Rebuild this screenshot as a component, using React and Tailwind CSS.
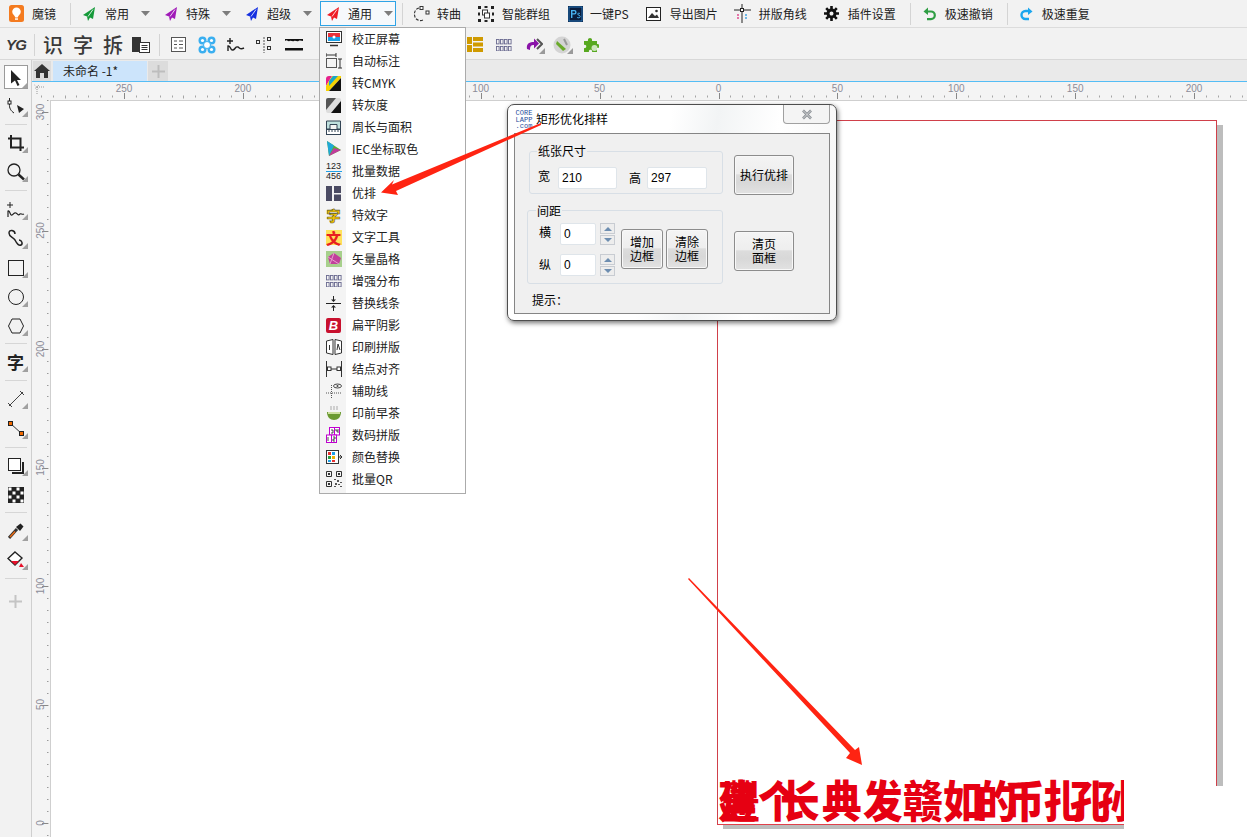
import React from 'react';

const font = { fontFamily: '"Noto Sans CJK SC", "Liberation Sans", sans-serif' };

const Svg = ({ w = 16, h = 16, className = '', children }) => (
    <svg width={w} height={h} viewBox={`0 0 ${w} ${h}`} className={`shrink-0 ${className}`}>{children}</svg>
);

const Plane = ({ color }) => (
    <Svg w={12} h={14}>
        <path d="M12 0 L0 8 L4 9.5 L5 14 L7 10.5 L10 12 Z" fill={color} />
        <path d="M10 2.5 L5 9.5" stroke="#fff" strokeWidth="0.8" fill="none" />
    </Svg>
);

const Caret = () => <Svg w={9} h={5}><path d="M0 0 H9 L4.5 5 Z" fill="#7d7d7d" /></Svg>;

const Sep = ({ className = '' }) => <div className={`w-px h-[22px] bg-[#d4d4d4] shrink-0 ${className}`} />;

const Item = ({ icon, label, className = '', gap = 'ml-2' }) => (
    <div className={`flex items-center shrink-0 ${className}`}>
        {icon}
        <span className={`${gap} whitespace-nowrap`}>{label}</span>
    </div>
);

const Row1 = () => (
    <div className="h-[28px] bg-[#f2f2f2] border-b border-[#dcdcdc] flex items-center pl-[9px] text-[12px] text-[#222]">
        <Svg w={15} h={17}>
            <rect width="15" height="17" rx="2.5" fill="#f47b20" />
            <path d="M7.5 2.5 a4.3 4.3 0 0 1 4.3 4.3 c0 2.6 -2.6 3.5 -3.1 5.7 h-2.4 c-.5 -2.2 -3.1 -3.1 -3.1 -5.7 a4.3 4.3 0 0 1 4.3 -4.3 Z" fill="#fff" />
            <rect x="6" y="13.3" width="3" height="1.5" fill="#fff" />
        </Svg>
        <span className="ml-2">魔镜</span>
        <Sep className="ml-[14px]" />
        <div className="flex items-center w-[82px] ml-3 shrink-0"><Plane color="#159a3a" /><span className="ml-[10px]">常用</span><span className="ml-3 flex"><Caret /></span></div>
        <div className="flex items-center w-[81px] shrink-0"><Plane color="#a01ab8" /><span className="ml-[9px]">特殊</span><span className="ml-3 flex"><Caret /></span></div>
        <div className="flex items-center w-[74px] shrink-0"><Plane color="#1530e0" /><span className="ml-[9px]">超级</span><span className="ml-3 flex"><Caret /></span></div>
        <div className="flex items-center w-[76px] h-[25px] pl-[6px] shrink-0 border border-[#2ea3e6] bg-[#f6f9fc]"><Plane color="#ee1c25" /><span className="ml-[9px]">通用</span><span className="ml-3 flex"><Caret /></span></div>
        <Sep className="ml-[6px]" />
        <Item className="ml-[9px]" gap="ml-[7px]" label="转曲" icon={
            <Svg w={18} h={18}>
                <path d="M7 3 C3 4 1.5 8 3 12 C4 15 8 16.5 11 15" fill="none" stroke="#333" strokeWidth="1.1" strokeDasharray="3 1.4" />
                <rect x="8" y="1.5" width="3" height="3" fill="#fff" stroke="#333" />
                <rect x="14" y="6" width="3" height="3" fill="#fff" stroke="#333" />
            </Svg>
        } />
        <Item className="ml-[17px]" label="智能群组" icon={
            <Svg w={16} h={16}>
                <path d="M0 0h3v3H0zM6.5 0h3v2h-3zM13 0h3v3h-3zM0 13h3v3H0zM6.5 14h3v2h-3zM13 13h3v3h-3zM0 6.5h2v3H0zM14 6.5h2v3h-2z" fill="#222" />
                <rect x="4.5" y="4" width="5" height="5" fill="#fff" stroke="#333" />
                <rect x="6.5" y="7" width="5" height="5" fill="#fff" stroke="#333" />
            </Svg>
        } />
        <Item className="ml-[18px]" gap="ml-[7px]" label="一键PS" icon={
            <Svg w={15} h={16}>
                <rect width="15" height="16" fill="#0a1d3c" />
                <rect x="1" y="1" width="13" height="14" fill="none" stroke="#2e8bd8" strokeWidth="0.8" />
                <path d="M3 4h3.4a2 2 0 0 1 0 4.4H4.4V12H3z M4.4 5.2v2h1.8a1 1 0 0 0 0-2z" fill="#49b4f2" />
                <path d="M12 7.6c-1-.6-2.4-.5-2.4.5 0 1.2 2.6.8 2.6 2.4 0 1.4-1.8 1.6-3 1" stroke="#49b4f2" strokeWidth="1" fill="none" />
            </Svg>
        } />
        <Item className="ml-[17px]" gap="ml-[9px]" label="导出图片" icon={
            <Svg w={15} h={14}>
                <rect x="0.5" y="0.5" width="14" height="13" fill="#fff" stroke="#222" />
                <path d="M2 11 L6 6 L9 9 L11 7.5 L13 11 Z" fill="#333" />
                <circle cx="10.5" cy="4" r="1.3" fill="#333" />
            </Svg>
        } />
        <Item className="ml-4" label="拼版角线" icon={
            <Svg w={17} h={19}>
                <path d="M8 0v19M0 6h17" stroke="#222" strokeWidth="1" />
                <rect x="6.5" y="4.5" width="3" height="3" fill="#fff" stroke="#222" />
                <path d="M4 10v2M4 13v2" stroke="#e0408a" strokeWidth="1.4" />
                <path d="M12 10v2M12 13v2" stroke="#3aa0e0" strokeWidth="1.4" />
            </Svg>
        } />
        <Item className="ml-[17px]" gap="ml-[9px]" label="插件设置" icon={
            <Svg w={15} h={15}>
                <path d="M7.5 4a3.5 3.5 0 1 0 0 7 3.5 3.5 0 0 0 0-7z" fill="none" stroke="#111" strokeWidth="3" />
                <path d="M7.5 0v15M0 7.5h15M2.2 2.2l10.6 10.6M12.8 2.2L2.2 12.8" stroke="#111" strokeWidth="2.6" strokeDasharray="3 9 3 0" />
            </Svg>
        } />
        <Sep className="ml-[14px]" />
        <Item className="ml-3" gap="ml-[9px]" label="极速撤销" icon={
            <Svg w={13} h={14}>
                <path d="M3.5 4.5 H8 a3.8 3.8 0 0 1 0 7.6 H4" fill="none" stroke="#2f9e44" strokeWidth="2.2" />
                <path d="M5 0.5 V8 L0.5 4.5 Z" fill="#2f9e44" />
            </Svg>
        } />
        <Sep className="ml-[14px]" />
        <Item className="ml-[11px]" gap="ml-[9px]" label="极速重复" icon={
            <Svg w={14} h={14}>
                <path d="M10 4 H6.5 a4 4 0 0 0 0 8 H10" fill="none" stroke="#1ca6ee" strokeWidth="2.4" />
                <path d="M9 0.5 V8 L13.5 4.5 Z" fill="#1ca6ee" />
            </Svg>
        } />
    </div>
);

const Grid4 = ({ fill = '#6a6a90' }) => (
    <Svg w={16} h={12}>
        {[0, 7].map(y => [0, 4, 8, 12].map(x => <rect key={`${x}-${y}`} x={x + 0.5} y={y + 0.5} width="2.6" height="4.4" fill="none" stroke={fill} strokeWidth="0.9" />))}
    </Svg>
);

const Corner = () => <span className="absolute right-[1px] bottom-[1px] w-0 h-0 border-l-[6px] border-l-transparent border-b-[6px] border-b-[#9a9a9a]" />;

const Row2 = () => (
    <div className="h-[32px] bg-[#f2f2f2] border-b border-[#d8d8d8] flex items-center pl-[6px] pt-[2px] text-[#3a3a3a]">
        <span className="w-[20px] text-[15px] font-black italic leading-none tracking-tighter" style={{ fontFamily: '"Liberation Sans", sans-serif' }}>YG</span>
        <Sep className="ml-2" />
        <span className="ml-2 w-[30px] text-[20px] font-medium leading-none">识</span>
        <span className="w-[30px] text-[20px] font-medium leading-none">字</span>
        <span className="w-[28px] text-[20px] font-medium leading-none">拆</span>
        <Svg w={20} h={18}>
            <path d="M1 1h9v15H1z" fill="#333" />
            <rect x="8.5" y="6.5" width="10" height="10" fill="#fff" stroke="#333" />
            <path d="M10.5 9.5h6M10.5 11.5h6M10.5 13.5h6" stroke="#333" />
        </Svg>
        <Sep className="ml-2" />
        <span className="ml-[11px] flex">
            <Svg w={15} h={15}>
                <rect x="0.5" y="0.5" width="14" height="14" fill="#fff" stroke="#555" />
                <path d="M3 4h3M3 7.5h3M3 11h3M8 4h4M8 7.5h4M8 11h4" stroke="#555" />
            </Svg>
        </span>
        <span className="ml-3 flex">
            <Svg w={18} h={18}>
                <g fill="#3aaff0">
                    <circle cx="4.5" cy="4.5" r="4" /><circle cx="13.5" cy="4.5" r="4" /><circle cx="4.5" cy="13.5" r="4" /><circle cx="13.5" cy="13.5" r="4" />
                </g>
                <circle cx="9" cy="9" r="3.5" fill="#fff" stroke="#3aaff0" />
                <circle cx="4.5" cy="4.5" r="1.6" fill="#fff" /><circle cx="13.5" cy="4.5" r="1.6" fill="#fff" /><circle cx="4.5" cy="13.5" r="1.6" fill="#fff" /><circle cx="13.5" cy="13.5" r="1.6" fill="#fff" />
            </Svg>
        </span>
        <span className="ml-[11px] flex">
            <Svg w={18} h={16}>
                <path d="M3 1v6M0 4h6" stroke="#222" strokeWidth="1.4" />
                <path d="M1 14 V9 C4 8 3 14 6 13 C9 12 8 9 11 10 C13 11 13 13 17 11" fill="none" stroke="#222" strokeWidth="1.4" />
            </Svg>
        </span>
        <span className="ml-[11px] flex">
            <Svg w={18} h={16}>
                <rect x="0.5" y="3.5" width="3" height="3" fill="none" stroke="#333" />
                <rect x="11.5" y="0.5" width="3" height="3" fill="none" stroke="#333" />
                <rect x="11.5" y="9.5" width="3" height="3" fill="none" stroke="#333" />
                <path d="M8 0v16" stroke="#555" strokeDasharray="2 1" />
            </Svg>
        </span>
        <span className="ml-[11px] flex">
            <Svg w={18} h={14}>
                <path d="M0 3c2-2 3 1 4.5 0s3 1 4.500 0 3 1 4.500 0 3 0 4.500 0V1H0z" fill="#111" />
                <rect y="10" width="18" height="2.500" fill="#111" />
            </Svg>
        </span>
    </div>
);

const TopRight = () => (
    <div className="absolute left-[467px] top-[28px] h-[31px] pt-[2px] flex items-center">
        <Svg w={16} h={15}>
            <path d="M0 0h5v7H0zM0 8h5v7H0zM6 0h10v4H6zM6 5.500h10v4H6zM6 11h10v4H6z" fill="#cf9a00" />
        </Svg>
        <span className="ml-[13px] flex"><Grid4 /></span>
        <span className="ml-[14px] relative flex w-[20px] h-[20px] items-center">
            <Svg w={17} h={15}>
                <path d="M1 12 C0 6 4 5 8 5 V1.500 L13 6.500 L8 11.500 V8 C5 8 4 9 4 13 Z" fill="#8a14a8" />
                <path d="M11 2 L16 7 L11 12" fill="none" stroke="#555" strokeWidth="2" />
            </Svg>
            <Corner />
        </span>
        <span className="ml-[7px] relative flex w-[21px] h-[20px] items-center">
            <Svg w={18} h={18}>
                <circle cx="9" cy="9" r="8.500" fill="#d4d4d4" />
                <path d="M4 5 L13 13 L10 15 L3 8 Z" fill="#6aaa2a" />
                <path d="M11 3 L14 9" stroke="#999" strokeWidth="2" />
            </Svg>
            <Corner />
        </span>
        <span className="ml-[9px] flex">
            <Svg w={16} h={17}>
                <path d="M1 5h4c-1-4 5-4 4 0h5v3c3-1 3 5 0 4v4H9c1-3-4-3-3 0H1v-4c3 1 3-4 0-3z" fill="#57a81f" />
                <circle cx="11.500" cy="12" r="3" fill="#fff" opacity=".7" />
            </Svg>
        </span>
    </div>
);

const HRuler = () => {
    const x0 = 718.5 - 32;
    const labels = [[-5, 250], [-4, 200], [-3, 150], [-2, 100], [-1, 50], [0, 0], [1, 50], [2, 100], [3, 150], [4, 200]];
    const dots = [];
    for (let i = -60; i <= 50; i++) dots.push(x0 + i * 11.89);
    return (
        <svg width="1215" height="18" className="block bg-[#f4f4f4]">
            <g stroke="#a5a5a5">
                {dots.map(x => <path key={x} d={`M${Math.round(x)}.5 13.500v${Math.abs(x - x0) % 59.45 < 1 ? 3 : 2}`} />)}
            </g>
            {labels.map(([k, t]) => (
                <g key={k}>
                    <path d={`M${Math.round(x0 + k * 118.9)}.5 11v6`} stroke="#888" />
                    <text x={x0 + k * 118.9} y="10" fontSize="10" textAnchor="middle" fill="#8c8c98" fontFamily="Liberation Sans">{t}</text>
                </g>
            ))}
            <path d="M2.500 3 L7 7 M7 3 L2.500 7 M5 5 L12 5 M5 5V12" stroke="#999" strokeDasharray="1 1" />
        </svg>
    );
};

const VRuler = () => {
    const y0 = 823 - 100;
    const labels = [[-6, 300], [-5, 250], [-4, 200], [-3, 150], [-2, 100], [-1, 50], [0, 0]];
    const dots = [];
    for (let i = -62; i <= 10; i++) dots.push(y0 + i * 11.85);
    return (
        <svg width="18" height="737" className="block bg-[#f4f4f4] shrink-0">
            <g stroke="#9a9a9a">
                {dots.map(y => <path key={y} d={`M15 ${Math.round(y)}.5h1.500`} />)}
            </g>
            {labels.map(([k, t]) => {
                const y = y0 + k * 118.5;
                return (
                    <g key={k}>
                        <path d={`M10 ${Math.round(y)}.5h6`} stroke="#888" />
                        <text transform={`translate(11.500 ${y}) rotate(-90)`} fontSize="10" textAnchor="middle" fill="#8c8c98" fontFamily="Liberation Sans">{t}</text>
                    </g>
                );
            })}
        </svg>
    );
};

const Tool = ({ children, active, noCorner, className = '' }) => (
    <div className={`relative w-[24px] mx-auto h-[29px] flex items-center justify-center shrink-0 ${className}`}>
        {active && <span className="absolute inset-x-0 top-[2px] bottom-[3px] border border-[#9a9a9a] bg-white" />}
        <span className="relative flex">{children}</span>
        {!noCorner && <span className="absolute right-0 bottom-[4px] w-0 h-0 border-l-[6px] border-l-transparent border-b-[6px] border-b-[#a0a0a0]" />}
    </div>
);

const ToolSep = ({ className }) => (
    <div className={`flex items-center shrink-0 ${className}`}><div className="w-[22px] mx-auto h-px bg-[#d6d6d6]" /></div>
);

const LeftBar = () => (
    <div className="w-[32px] shrink-0 bg-[#f2f2f2] border-r border-[#cfcfcf] flex flex-col pt-[3px]">
        <Tool active><Svg w={12} h={16}><path d="M1 0 L11 10 H7 L9.500 15 L7.500 16 L5 10.500 L1 13.500 Z" fill="#222" /></Svg></Tool>
        <Tool>
            <Svg w={18} h={18}>
                <rect x="1" y="3" width="3" height="3" fill="#fff" stroke="#222" />
                <path d="M2.500 0 v3 M2.500 6 C2 10 4 13 7 15" fill="none" stroke="#222" />
                <path d="M10 7 L17 11 L12 15 Z" fill="#222" />
            </Svg>
        </Tool>
        <ToolSep className="h-[7px]" />
        <Tool>
            <Svg w={16} h={16}>
                <path d="M3 0 V12.500 H16 M0 3.500 H12.500 V16" fill="none" stroke="#222" strokeWidth="2" />
            </Svg>
        </Tool>
        <Tool>
            <Svg w={18} h={18}>
                <circle cx="7" cy="7" r="6" fill="none" stroke="#222" strokeWidth="1.300" />
                <path d="M11.500 11.500 L17 16.500" stroke="#222" strokeWidth="2.400" />
            </Svg>
        </Tool>
        <ToolSep className="h-[9px]" />
        <Tool>
            <Svg w={18} h={16}>
                <path d="M3 0v6M0 3h6" stroke="#222" />
                <path d="M1 15 V9 C3 8 3 14 5 13 C7 12 7 10 9 11 C11 12 11 14 13 12 C14 11 15 13 17 12" fill="none" stroke="#222" strokeWidth="1.200" />
            </Svg>
        </Tool>
        <Tool>
            <Svg w={17} h={19}>
                <path d="M8 5 C8 1 2 0 2 4 C2 8 6 8 8 11 C10 15 12 17 14 16 C16 15 15 11 12 11" fill="none" stroke="#222" strokeWidth="1.500" />
            </Svg>
        </Tool>
        <Tool><Svg w={16} h={16}><rect x="0.500" y="0.500" width="15" height="15" fill="none" stroke="#222" /></Svg></Tool>
        <Tool><Svg w={16} h={16}><circle cx="8" cy="8" r="7.500" fill="none" stroke="#222" /></Svg></Tool>
        <Tool><Svg w={16} h={16}><path d="M4 1 H12 L15.500 8 L12 15 H4 L0.500 8 Z" fill="none" stroke="#222" /></Svg></Tool>
        <ToolSep className="h-[7px]" />
        <Tool><span className="text-[17px] font-bold leading-none text-[#222]">字</span></Tool>
        <ToolSep className="h-[8px]" />
        <Tool>
            <Svg w={16} h={16}><path d="M1 15 L15 1" stroke="#444" /><path d="M0 12 L4 16 M12 0 L16 4" stroke="#444" /></Svg>
        </Tool>
        <Tool className="mt-[1px]">
            <Svg w={16} h={16}>
                <path d="M2 2 L14 13" stroke="#333" />
                <rect x="0.500" y="0.500" width="4" height="4" fill="#f26a00" stroke="#222" />
                <rect x="11.500" y="10.500" width="4" height="4" fill="#f26a00" stroke="#222" />
            </Svg>
        </Tool>
        <ToolSep className="h-[8px]" />
        <Tool>
            <Svg w={16} h={16}>
                <rect x="0.500" y="0.500" width="12" height="12" fill="#fff" stroke="#222" />
                <path d="M4 15 H15 V4" fill="none" stroke="#222" strokeWidth="2" />
            </Svg>
        </Tool>
        <Tool noCorner>
            <Svg w={16} h={16}>
                <rect width="16" height="16" fill="#222" />
                {[0, 4, 8, 12].flatMap(y => [0, 4, 8, 12].map(x => (x + y) % 8 === 0 ? <rect key={`${x}-${y}`} x={x + 0.500} y={y + 0.500} width="3" height="3" fill="#fff" /> : null))}
            </Svg>
        </Tool>
        <ToolSep className="h-[7px]" />
        <Tool>
            <Svg w={16} h={16}>
                <path d="M1 15 L9 6" stroke="#333" strokeWidth="3" />
                <path d="M2 14 L7 8.500" stroke="#ea6a12" strokeWidth="1.500" />
                <path d="M8 4 L12 8 L15.500 3.500 L12.500 0.500 Z" fill="#222" />
            </Svg>
        </Tool>
        <Tool>
            <Svg w={17} h={17}>
                <path d="M8 1 L15 7 L8 14 L1 7.500 Z" fill="#fff" stroke="#222" strokeWidth="1.400" />
                <path d="M4 10 L12 10 L8 14 Z" fill="#e8102a" />
                <path d="M14 12 L17 16 H12 Z" fill="#e8102a" />
            </Svg>
        </Tool>
        <ToolSep className="h-[8px]" />
        <Tool noCorner className="mt-[5px]">
            <Svg w={13} h={13}><path d="M6.500 0v13M0 6.500h13" stroke="#c4c4c4" strokeWidth="2" /></Svg>
        </Tool>
    </div>
);

const menuItems = [
    ['校正屏幕', <Svg key="a" w={16} h={16}><rect x="0.500" y="0.500" width="15" height="11" fill="#fff" stroke="#333" /><rect x="2" y="2" width="12" height="4" fill="#e8303a" /><rect x="2" y="6" width="12" height="4" fill="#1aa0e8" /><circle cx="8" cy="6" r="1.500" fill="#fff" /><path d="M4 14.500h8" stroke="#333" strokeWidth="1.500" /></Svg>],
    ['自动标注', <Svg key="b" w={16} h={16}><path d="M0 0v4M10 0v4M0 2h10M14 6v9M12 6h4M12 15h4" stroke="#333" /><rect x="0.500" y="5.500" width="10" height="9" fill="none" stroke="#555" /></Svg>],
    ['转CMYK', <Svg key="c" w={15} h={15}><path d="M0 3 Q0 0 3 0 H6 L0 10 Z" fill="#e6218c" /><path d="M6 0 H15 V2 L3 15 H0 V10 Z" fill="#f7d300" /><path d="M15 2 V15 H3 Z" fill="#111" /><path d="M7 0 H12 L3 10 V5 Z" fill="#00a0e0" opacity=".9" /></Svg>],
    ['转灰度', <Svg key="d" w={15} h={15}><rect width="15" height="15" rx="2" fill="#ddd" /><path d="M0 12 L10 0 H2 Q0 0 0 2 Z" fill="#555" /><path d="M15 3 V15 H5 Z" fill="#111" /></Svg>],
    ['周长与面积', <Svg key="e" w={15} h={15}><path d="M0.500 9 V1 H14.500 V9 H11 V4.500 H4 V9 Z" fill="#bfe0de" stroke="#345" /><rect x="0.500" y="9.500" width="14" height="5" fill="#fff" stroke="#345" /><path d="M3 10v2M6 10v2M9 10v2M12 10v2" stroke="#345" /></Svg>],
    ['IEC坐标取色', <Svg key="f" w={16} h={16}><path d="M1 0 L15 9 L3 15 Z" fill="#5bb030" /><path d="M1 0 L8 4.500 L3 15 Z" fill="#20a8d8" /><path d="M15 9 L3 15 L8 7 Z" fill="#c03a9c" /></Svg>],
    ['批量数据', <span key="g" className="w-[16px] text-[9px] leading-[9px] text-center text-[#222]" style={{ fontFamily: '"Liberation Sans", sans-serif' }}><span className="block">123</span><span className="block border-t border-[#1ca0e8]">456</span></span>],
    ['优排', <Svg key="h" w={15} h={15}><path d="M0 0h6v15H0zM8 0h7v7H8zM8 8.500h7V15H8z" fill="#4b4b63" /></Svg>],
    ['特效字', <span key="i" className="text-[14px] font-black leading-none text-[#f4c400] w-[16px] text-center" style={{ WebkitTextStroke: '0.6px #553' }}>字</span>],
    ['文字工具', <span key="j" className="text-[15px] font-black leading-none text-[#e82020] bg-[#ffe25a] w-[16px] h-[15px] text-center">文</span>],
    ['矢量晶格', <Svg key="k" w={16} h={16}><rect width="16" height="16" fill="#a7d08c" /><path d="M2 6 L8 2 L15 7 L13 13 L4 13 Z" fill="#c2409c" /><path d="M2 6 L13 13 M8 2 L4 13" stroke="#e8a0d0" /></Svg>],
    ['增强分布', <Grid4 key="l" />],
    ['替换线条', <Svg key="m" w={15} h={15}><path d="M0 7.500h15" stroke="#222" /><path d="M7.500 0v5M7.500 10v5" stroke="#222" /><path d="M5 3.500 L7.500 6 L10 3.500 ZM5 11.500 L7.500 9 L10 11.500 Z" fill="#222" /></Svg>],
    ['扁平阴影', <span key="n" className="w-[15px] h-[15px] rounded-[2px] bg-[#c8102e] text-white text-[13px] font-black italic leading-[15px] text-center" style={{ fontFamily: '"Liberation Sans", sans-serif' }}>B</span>],
    ['印刷拼版', <Svg key="o" w={16} h={16}><path d="M0.500 2 L7 0.500 V15.500 L0.500 14 Z M9 0.500 L15.500 2 V14 L9 15.500 Z" fill="#fff" stroke="#333" /><path d="M3.500 11 V6 M11 11 L12 5 L14 11" stroke="#333" fill="none" /></Svg>],
    ['结点对齐', <Svg key="p" w={16} h={16}><path d="M0.500 0v16M15.500 0v16M0 8h16" stroke="#333" /><rect x="1.500" y="6" width="3.500" height="3.500" fill="#fff" stroke="#333" /><rect x="11" y="6" width="3.500" height="3.500" fill="#fff" stroke="#333" /></Svg>],
    ['辅助线', <Svg key="q" w={16} h={16}><path d="M5.500 2v14M0 10h16" stroke="#555" strokeDasharray="1 1" /><ellipse cx="11.500" cy="3" rx="4" ry="2" fill="none" stroke="#444" /><circle cx="11.500" cy="3" r="1" fill="#444" /></Svg>],
    ['印前早茶', <Svg key="r" w={16} h={15}><path d="M5 0v4M8 0v4M11 0v4" stroke="#aaa" /><path d="M1 6 H15 C15 11 12 14 8 14 C4 14 1 11 1 6 Z" fill="#6a9a30" /><path d="M2 6 H14 V8 H2 Z" fill="#cde0a0" /></Svg>],
    ['数码拼版', <Svg key="s" w={16} h={16}><rect x="3.500" y="0.500" width="10" height="7.500" fill="#fff" stroke="#c000d0" /><rect x="0.500" y="8" width="10" height="7.500" fill="#fff" stroke="#c000d0" /><path d="M8.500 0.500v7.500M5.500 8v7.500" stroke="#c000d0" /><path d="M5 3h2v3H5M10 2v2h2M12 2v4M2 10v4M7 10h2v2H7v2h2" fill="none" stroke="#222" strokeWidth=".8" /></Svg>],
    ['颜色替换', <Svg key="t" w={16} h={14}><rect x="0.500" y="0.500" width="12" height="13" fill="#fff" stroke="#333" /><path d="M2 2h3v3H2z" fill="#e83030" /><path d="M6 2h3v3H6z" fill="#1ca0e8" /><path d="M2 6h3v3H2z" fill="#2aa040" /><path d="M6 6h3v3H6z" fill="#f0b000" /><path d="M2 10h3v2H2z" fill="#1ca0e8" /><path d="M6 10h3v2H6z" fill="#e83030" /><path d="M12 7h4M14 5 L16 7 L14 9" fill="none" stroke="#333" /></Svg>],
    ['批量QR', <Svg key="u" w={16} h={16}><path d="M0.500 0.500h5v5h-5zM10.500 0.500h5v5h-5zM0.500 10.500h5v5h-5z" fill="none" stroke="#333" /><path d="M2 2h2v2H2zM12 2h2v2h-2zM2 12h2v2H2z" fill="#333" /><path d="M8 8h2v1H8zM11 9h2v2h-2zM14 11h2v1h-2zM9 12h2v2H9zM12 13h2v1h-2zM8 15h2v1H8zM14 15h2v1h-2z" fill="#555" /></Svg>],
];

const GeneralMenu = () => (
    <div className="absolute left-[319px] top-[27px] w-[147px] h-[467px] bg-white border border-[#ababab] flex flex-col text-[12px] text-[#222]">
        {menuItems.map(([label, icon]) => (
            <div key={label} className="h-[22px] flex items-center shrink-0">
                <div className="w-[26px] h-full bg-[#f4f4f4] flex items-center justify-center pl-[1px]">{icon}</div>
                <span className="ml-[6px] whitespace-nowrap">{label}</span>
            </div>
        ))}
        <div className="flex-1 w-[26px] bg-[#f4f4f4]" />
    </div>
);

const DlgBtn = ({ className = '', children }) => (
    <div className={`flex items-center justify-center text-center leading-[14px] border border-[#8c8c8c] rounded-[3px] bg-[linear-gradient(#f4f4f4_0%,#eeeeee_46%,#dcdcdc_50%,#d8d8d8_70%,#e2e2e2_100%)] shadow-[inset_0_0_0_1px_#f8f8f8] shrink-0 ${className}`}>
        {children}
    </div>
);

const Field = ({ className = '', children }) => (
    <div className={`h-[22px] bg-white border border-[#dfe5ea] rounded-[2px] flex items-center pl-[3px] text-[12px] shrink-0 ${className}`} style={{ fontFamily: '"Liberation Sans", sans-serif' }}>{children}</div>
);

const Spin = () => (
    <div className="ml-[4px] flex flex-col gap-px w-[15px] shrink-0">
        <div className="h-[11px] bg-[#ededed] border border-[#c8ccd2] flex items-center justify-center"><span className="w-0 h-0 border-x-[4px] border-x-transparent border-b-[4px] border-b-[#6d8db0]" /></div>
        <div className="h-[10px] bg-[#ededed] border border-[#c8ccd2] flex items-center justify-center"><span className="w-0 h-0 border-x-[4px] border-x-transparent border-t-[4px] border-t-[#6d8db0]" /></div>
    </div>
);

const Dialog = () => (
    <div className="absolute left-[507px] top-[104px] w-[330px] h-[217px] rounded-[7px] border border-[#4e4e4e] bg-[linear-gradient(100deg,#fff_0%,#fff_45%,#f2f4f5_58%,#fff_75%,#f4f4f4_100%)] shadow-[1px_2px_5px_rgba(0,0,0,0.55)] flex flex-col text-[12px] text-black">
        <div className="h-[28px] flex items-start shrink-0">
            <div className="ml-[7px] mt-[5px] w-[18px] text-[7px] leading-[6.500px] text-[#1f4e9c] text-center" style={{ fontFamily: '"Liberation Mono", monospace' }}>CORE<br />LAPP<br />.com</div>
            <span className="ml-[3px] mt-[5px] leading-[18px]">矩形优化排样</span>
            <div className="ml-auto mr-[6px] w-[47px] h-[19px] rounded-b-[4px] border border-t-0 border-[#a0a0a0] bg-[#f4f4f4] flex items-center justify-center">
                <Svg w={12} h={11}><path d="M2 1.500 L10 9.500 M10 1.500 L2 9.500" stroke="#8a8f95" strokeWidth="2.600" /><path d="M2 1.500 L10 9.500 M10 1.500 L2 9.500" stroke="#e8e8e8" strokeWidth="0.800" /></Svg>
            </div>
        </div>
        <div className="mx-[6px] mb-[6px] flex-1 border border-[#858585] bg-[#f0f0f0] flex">
            <div className="w-[208px] shrink-0 flex flex-col">
                <div className="relative ml-[14px] mt-[17px] w-[194px] h-[43px] border border-[#d8dfe6] rounded-[3px] flex items-end pb-[4px] pl-[8px] shrink-0">
                    <span className="absolute left-[7px] -top-[9px] px-[1px] bg-[#f0f0f0] leading-[16px]">纸张尺寸</span>
                    <span className="leading-[22px] -translate-y-[2px]">宽</span>
                    <Field className="ml-[8px] w-[59px]">210</Field>
                    <span className="ml-[12px] leading-[22px]">高</span>
                    <Field className="ml-[6px] w-[60px]">297</Field>
                </div>
                <div className="relative ml-[12px] mt-[16px] w-[196px] h-[74px] border border-[#d8dfe6] rounded-[3px] flex pl-[11px] pt-[12px] shrink-0">
                    <span className="absolute left-[8px] -top-[8px] px-[1px] bg-[#f0f0f0] leading-[16px]">间距</span>
                    <div className="flex flex-col gap-[9px] shrink-0">
                        <div className="flex items-center">
                            <span className="w-[21px] -translate-y-[2px]">横</span>
                            <Field className="w-[36px]">0</Field>
                            <Spin />
                        </div>
                        <div className="flex items-center">
                            <span className="w-[21px]">纵</span>
                            <Field className="w-[36px]">0</Field>
                            <Spin />
                        </div>
                    </div>
                    <DlgBtn className="ml-[6px] mt-[6px] w-[42px] h-[40px]">增加<br />边框</DlgBtn>
                    <DlgBtn className="ml-[3px] mt-[6px] w-[42px] h-[40px]">清除<br />边框</DlgBtn>
                </div>
                <span className="ml-[17px] mt-[7px] leading-[18px]">提示：</span>
            </div>
            <div className="ml-[11px] flex flex-col pt-[21px]">
                <DlgBtn className="w-[60px] h-[40px]">执行优排</DlgBtn>
                <DlgBtn className="mt-[36px] w-[60px] h-[40px]">清页<br />面框</DlgBtn>
            </div>
        </div>
    </div>
);

const bigChars = [
    ['建', 'w-[3px]'], ['豐', 'w-[37px]'], ['个', 'w-[22px]'], ['长', 'w-[42px]'], ['典', 'w-[41px]'], ['发', 'w-[40px]'],
    ['赣', 'w-[40px]'], ['如', 'w-[34px]'], ['的', 'w-[28px]'], ['币', 'w-[38px]'], ['扎', 'w-[27px]'], ['孔', 'w-[27px]'], ['孙', 'w-[27px]'],
];

const Page = () => (
    <>
        {/* page outline and shadow on the drawing canvas */}
        <div className="absolute left-[723px] top-[125px] w-[500px] h-[661px] bg-[#bdbdbd]" />
        <div className="absolute left-[717px] top-[120px] w-[500px] h-[666px] bg-white border-t border-x border-[#d0404a]" />
        <div className="absolute left-[723px] top-[825px] w-[401px] h-[4px] bg-[#bdbdbd]" />
        <div className="absolute left-[717px] top-[786px] w-px h-[39px] bg-[#d0404a]" />
        <div className="absolute left-[718px] top-[770px] w-[406px] h-[55px] overflow-hidden border-b border-[#e0404a] flex items-end">
            {bigChars.map(([c, w], i) => (
                <span key={i} className={`${w} shrink-0 overflow-visible whitespace-nowrap text-[44px] leading-[50px] font-black text-[#e60012] scale-x-90 origin-left`}>{c}</span>
            ))}
        </div>
    </>
);

const Arrows = () => (
    <svg width="1247" height="837" className="absolute left-0 top-0 pointer-events-none">
        <path d="M541 123 L392 184.500 L394 180 L381 192.500 L398 195 L396 191 L541 125 Z" fill="#ff2412" />
        <path d="M688 579 L850 753 L846 758 L862 765 L859 747 L855 750 L689 578 Z" fill="#ff2412" />
    </svg>
);

export default function App() {
    return (
        <div className="relative w-[1247px] h-[837px] overflow-hidden bg-[#f2f2f2]" style={font}>
            <Row1 />
            <Row2 />
            <div className="flex h-[777px]">
                <LeftBar />
                <div className="flex-1 flex flex-col min-w-0">
                    <div className="h-[22px] bg-[#eaeaea] border-b border-[#55bdf5] flex items-end shrink-0 pl-px text-[12px] text-[#222]">
                        <div className="w-[18px] h-[20px] bg-[#dcdcdc] flex items-center justify-center">
                            <Svg w={16} h={14}><path d="M8 0 L16 7 H14 V14 H10 V9 H6 V14 H2 V7 H0 Z" fill="#333" /></Svg>
                        </div>
                        <div className="ml-[2px] w-[94px] h-[20px] bg-[#cce4fb] flex items-center pl-[10px]">未命名 -1*</div>
                        <div className="ml-px w-[20px] h-[20px] bg-[#dcdcdc] flex items-center justify-center">
                            <Svg w={13} h={13}><path d="M6.500 0v13M0 6.500h13" stroke="#bdbdbd" strokeWidth="2" /></Svg>
                        </div>
                    </div>
                    <HRuler />
                    <div className="flex flex-1 min-h-0">
                        <VRuler />
                        <div className="flex-1 bg-white border-l border-t border-[#cfcfcf]" />
                    </div>
                </div>
            </div>
            <Page />
            <TopRight />
            <GeneralMenu />
            <Dialog />
            <Arrows />
        </div>
    );
}
